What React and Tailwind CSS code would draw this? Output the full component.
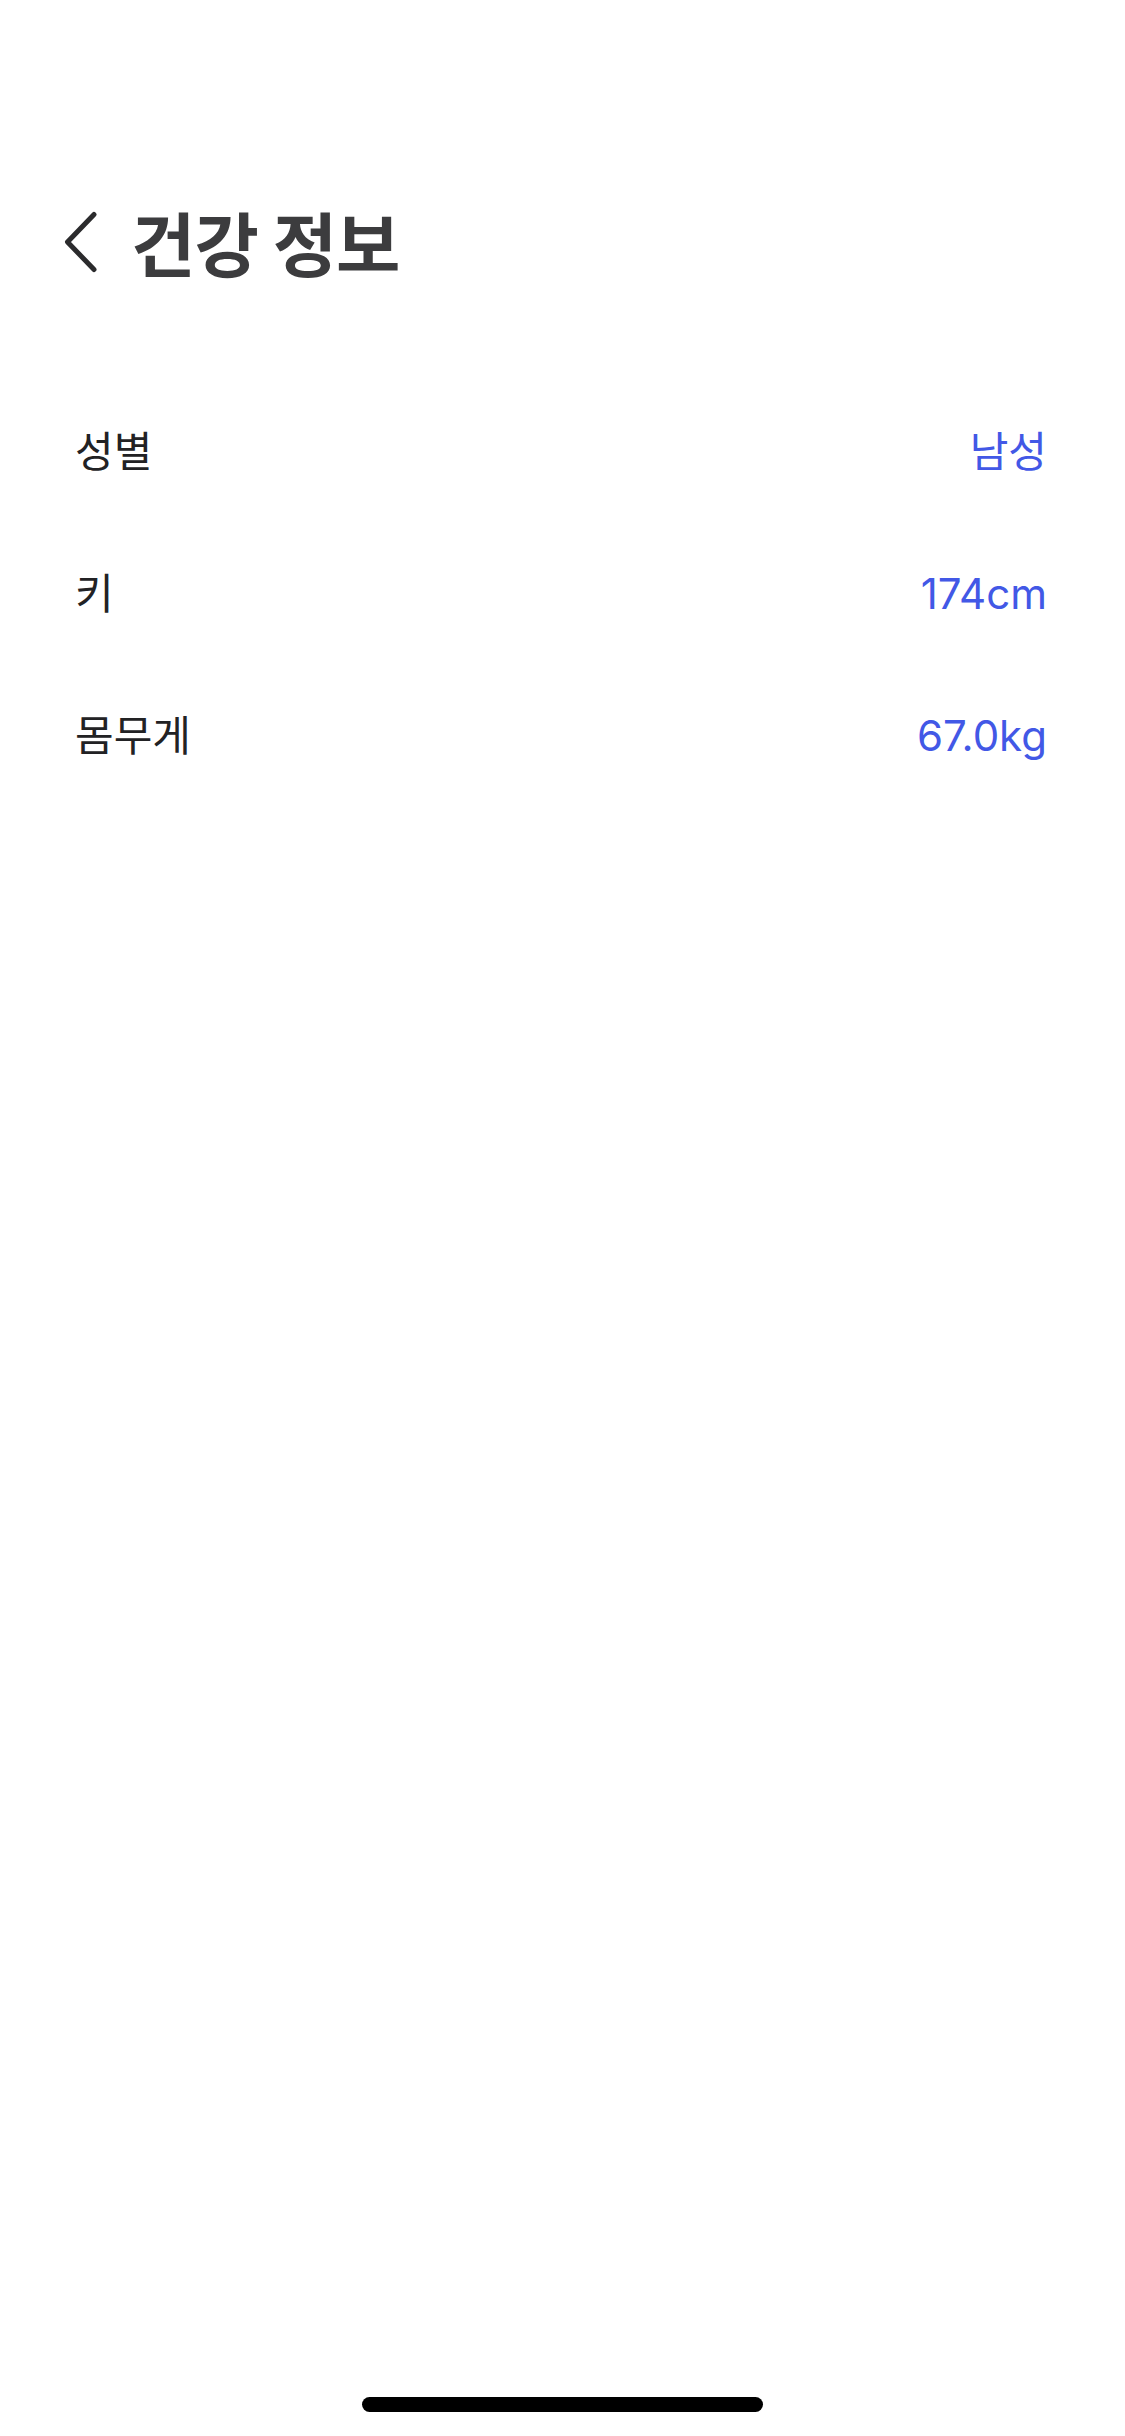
import React from 'react';

const rows = [
  { label: '성별', value: '남성' },
  { label: '키', value: '174cm' },
  { label: '몸무게', value: '67.0kg' },
];

export default function App() {
  return (
    <div
      className="w-[1125px] h-[2436px] bg-white flex flex-col"
      style={{ fontFamily: "Inter, 'Noto Sans CJK KR', sans-serif" }}
    >
      {/* 헤더 */}
      <div className="mt-[176px] h-[132px] flex items-center pl-[63px]">
        <button className="w-[36px] h-[66px] flex items-center justify-center">
          <svg width="36" height="66" viewBox="0 0 36 66" fill="none">
            <polyline
              points="31,5.5 4.5,33 31,60.5"
              stroke="#2b2b2d"
              strokeWidth="5"
              strokeLinecap="round"
              strokeLinejoin="round"
            />
          </svg>
        </button>
        <h1 className="ml-[32px] text-[70px] font-bold tracking-[-1px] text-[#3c3c3e] leading-none" style={{ fontFamily: "'Noto Sans CJK KR', sans-serif" }}>
          건강 정보
        </h1>
      </div>

      {/* 정보 목록 */}
      <div className="mt-[73px] flex flex-col pl-[75px] pr-[78px]">
        {rows.map((r) => (
          <div key={r.label} className="h-[142px] flex items-center justify-between">
            <span className="text-[42px] text-[#222224] leading-none">{r.label}</span>
            <span className="text-[42px] text-[#4258e6] leading-none">{r.value}</span>
          </div>
        ))}
      </div>

      {/* 홈 인디케이터 */}
      <div className="mt-auto mb-[24px] flex justify-center">
        <div className="w-[401px] h-[15px] rounded-full bg-black" />
      </div>
    </div>
  );
}
